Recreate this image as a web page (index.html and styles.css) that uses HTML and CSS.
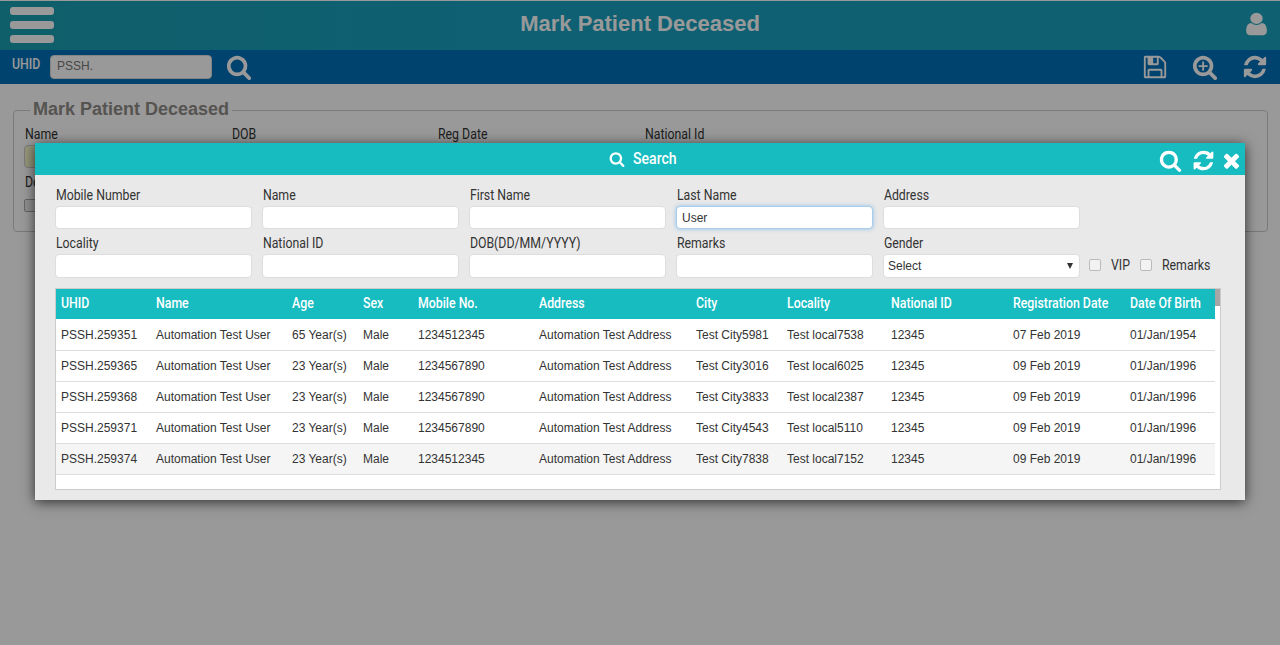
FILE: index.html
```html
<!DOCTYPE html>
<html lang="en">

<head>
    <meta charset="UTF-8">
    <meta name="viewport" content="width=device-width, initial-scale=1.0">
    <title>Mark Patient Deceased</title>
    <link rel="stylesheet" href="styles.css">
</head>

<body>
    <svg class="icon-defs" xmlns="http://www.w3.org/2000/svg">
        <symbol id="i-search" viewBox="0 0 1792 1792"><path d="M1216 832q0-185-131.5-316.5t-316.5-131.5-316.5 131.5-131.5 316.5 131.5 316.5 316.5 131.5 316.5-131.5 131.5-316.5zm512 832q0 52-38 90t-90 38q-54 0-90-38l-343-342q-179 124-399 124-143 0-273.5-55.5t-225-150-150-225-55.5-273.5 55.5-273.5 150-225 225-150 273.5-55.5 273.5 55.5 225 150 150 225 55.5 273.5q0 220-124 399l343 343q37 37 37 90z"/></symbol>
        <symbol id="i-refresh" viewBox="0 0 1792 1792"><path d="M1639 1056q0 5-1 7-64 268-268 434.5t-478 166.5q-146 0-282.5-55t-243.5-157l-129 129q-19 19-45 19t-45-19-19-45v-448q0-26 19-45t45-19h448q26 0 45 19t19 45-19 45l-137 137q71 66 161 102t187 36q134 0 250-65t186-179q11-17 53-117 8-23 30-23h192q13 0 22.5 9.5t9.5 22.5zm25-800v448q0 26-19 45t-45 19h-448q-26 0-45-19t-19-45 19-45l138-138q-148-137-349-137-134 0-250 65t-186 179q-11 17-53 117-8 23-30 23h-199q-13 0-22.5-9.5t-9.5-22.5v-7q65-268 270-434.5t480-166.5q146 0 284 55.5t245 156.5l130-129q19-19 45-19t45 19 19 45z"/></symbol>
        <symbol id="i-times" viewBox="0 0 1792 1792"><path d="M1490 1322q0 40-28 68l-136 136q-28 28-68 28t-68-28l-294-294-294 294q-28 28-68 28t-68-28l-136-136q-28-28-28-68t28-68l294-294-294-294q-28-28-28-68t28-68l136-136q28-28 68-28t68 28l294 294 294-294q28-28 68-28t68 28l136 136q28 28 28 68t-28 68l-294 294 294 294q28 28 28 68z"/></symbol>
        <symbol id="i-user" viewBox="0 0 1792 1792" preserveAspectRatio="none"><path d="M1536 1399q0 109-62.5 187t-150.5 78h-854q-88 0-150.5-78t-62.5-187q0-85 8.5-160.5t31.5-152 58.5-131 94-89 134.5-34.5q131 128 313 128t313-128q76 0 134.5 34.5t94 89 58.5 131 31.5 152 8.5 160.5zm-256-887q0 159-112.5 271.5t-271.5 112.5-271.5-112.5-112.5-271.5 112.5-271.5 271.5-112.5 271.5 112.5 112.5 271.5z"/></symbol>
        <symbol id="i-save" viewBox="0 0 1792 1792"><path d="M512 1536h768v-384h-768v384zm896 0h128v-896q0-14-10-38.5t-20-34.5l-281-281q-10-10-34-20t-39-10v416q0 40-28 68t-68 28h-576q-40 0-68-28t-28-68v-416h-128v1280h128v-416q0-40 28-68t68-28h832q40 0 68 28t28 68v416zm-384-928v-320q0-13-9.5-22.5t-22.5-9.5h-192q-13 0-22.5 9.5t-9.5 22.5v320q0 13 9.5 22.5t22.5 9.5h192q13 0 22.5-9.5t9.5-22.5zm640 32v928q0 40-28 68t-68 28h-1344q-40 0-68-28t-28-68v-1344q0-40 28-68t68-28h928q40 0 88 20t76 48l280 280q28 28 48 76t20 88z"/></symbol>
        <symbol id="i-zoom" viewBox="0 0 1792 1792"><path d="M1088 800v64q0 13-9.5 22.5t-22.5 9.5h-224v224q0 13-9.5 22.5t-22.5 9.5h-64q-13 0-22.5-9.5t-9.5-22.5v-224h-224q-13 0-22.5-9.5t-9.5-22.5v-64q0-13 9.5-22.5t22.5-9.5h224v-224q0-13 9.5-22.5t22.5-9.5h64q13 0 22.5 9.5t9.5 22.5v224h224q13 0 22.5 9.5t9.5 22.5zm128 32q0-185-131.5-316.5t-316.5-131.5-316.5 131.5-131.5 316.5 131.5 316.5 316.5 131.5 316.5-131.5 131.5-316.5zm512 832q0 53-37.5 90.5t-90.5 37.5q-54 0-90-38l-343-342q-179 124-399 124-143 0-273.5-55.5t-225-150-150-225-55.5-273.5 55.5-273.5 150-225 225-150 273.5-55.5 273.5 55.5 225 150 150 225 55.5 273.5q0 220-124 399l343 343q37 37 37 90z"/></symbol>
    </svg>

    <div class="page">
        <header class="top-bar">
            <div class="menu-btn"><span></span><span></span><span></span></div>
            <h1 class="page-title">Mark Patient Deceased</h1>
            <div class="user-box"><svg class="user-icon"><use href="#i-user"/></svg></div>
        </header>

        <div class="tool-bar">
            <label class="uhid-label cond" for="uhid">UHID</label>
            <input class="uhid-input" id="uhid" type="text" value="PSSH.">
            <svg class="tool-icon search-icon"><use href="#i-search"/></svg>
            <div class="tool-right">
                <svg class="tool-icon"><use href="#i-save"/></svg>
                <svg class="tool-icon"><use href="#i-zoom"/></svg>
                <svg class="tool-icon"><use href="#i-refresh"/></svg>
            </div>
        </div>

        <fieldset class="patient-box">
            <legend>Mark Patient Deceased</legend>
            <div class="patient-row">
                <div class="patient-col"><span class="cond">Name</span><div class="patient-name"></div></div>
                <div class="patient-col"><span class="cond">DOB</span></div>
                <div class="patient-col"><span class="cond">Reg Date</span></div>
                <div class="patient-col"><span class="cond">National Id</span></div>
            </div>
            <div class="deceased-label"><span class="cond">De</span></div>
            <div class="deceased-check"></div>
        </fieldset>
    </div>

    <div class="overlay">
        <div class="modal">
            <div class="modal-head">
                <div class="modal-title">
                    <svg class="title-icon"><use href="#i-search"/></svg>
                    <span class="cond">Search</span>
                </div>
                <div class="modal-actions">
                    <svg class="action-icon"><use href="#i-search"/></svg>
                    <svg class="action-icon"><use href="#i-refresh"/></svg>
                    <svg class="action-icon close-icon"><use href="#i-times"/></svg>
                </div>
            </div>

            <div class="modal-body">
                <form class="search-form">
                    <div class="field"><label class="cond">Mobile Number</label><input type="text"></div>
                    <div class="field"><label class="cond">Name</label><input type="text"></div>
                    <div class="field"><label class="cond">First Name</label><input type="text"></div>
                    <div class="field"><label class="cond">Last Name</label><input class="focused" type="text" value="User"></div>
                    <div class="field"><label class="cond">Address</label><input type="text"></div>
                    <div></div>
                    <div class="field tall"><label class="cond">Locality</label><input type="text"></div>
                    <div class="field tall"><label class="cond">National ID</label><input type="text"></div>
                    <div class="field tall"><label class="cond">DOB(DD/MM/YYYY)</label><input type="text"></div>
                    <div class="field tall"><label class="cond">Remarks</label><input type="text"></div>
                    <div class="field tall">
                        <label class="cond">Gender</label>
                        <div class="fake-select">Select<span class="caret"></span></div>
                    </div>
                    <div class="checks">
                        <span class="check"></span><span class="check-text vip"><span class="cond">VIP</span></span>
                        <span class="check"></span><span class="check-text"><span class="cond">Remarks</span></span>
                    </div>
                </form>

                <div class="result-box">
                    <div class="scroll-thumb"></div>
                    <table class="results">
                        <colgroup>
                            <col class="c1"><col class="c2"><col class="c3"><col class="c4"><col class="c5"><col class="c6">
                            <col class="c7"><col class="c8"><col class="c9"><col class="c10"><col class="c11">
                        </colgroup>
                        <thead>
                            <tr>
                                <th><span class="cond">UHID</span></th>
                                <th><span class="cond">Name</span></th>
                                <th><span class="cond">Age</span></th>
                                <th><span class="cond">Sex</span></th>
                                <th><span class="cond">Mobile No.</span></th>
                                <th><span class="cond">Address</span></th>
                                <th><span class="cond">City</span></th>
                                <th><span class="cond">Locality</span></th>
                                <th><span class="cond">National ID</span></th>
                                <th><span class="cond">Registration Date</span></th>
                                <th><span class="cond">Date Of Birth</span></th>
                            </tr>
                        </thead>
                        <tbody>
                            <tr>
                                <td>PSSH.259351</td><td>Automation Test User</td><td>65 Year(s)</td><td>Male</td><td>1234512345</td><td>Automation Test Address</td>
                                <td>Test City5981</td><td>Test local7538</td><td>12345</td><td>07 Feb 2019</td><td>01/Jan/1954</td>
                            </tr>
                            <tr>
                                <td>PSSH.259365</td><td>Automation Test User</td><td>23 Year(s)</td><td>Male</td><td>1234567890</td><td>Automation Test Address</td>
                                <td>Test City3016</td><td>Test local6025</td><td>12345</td><td>09 Feb 2019</td><td>01/Jan/1996</td>
                            </tr>
                            <tr>
                                <td>PSSH.259368</td><td>Automation Test User</td><td>23 Year(s)</td><td>Male</td><td>1234567890</td><td>Automation Test Address</td>
                                <td>Test City3833</td><td>Test local2387</td><td>12345</td><td>09 Feb 2019</td><td>01/Jan/1996</td>
                            </tr>
                            <tr>
                                <td>PSSH.259371</td><td>Automation Test User</td><td>23 Year(s)</td><td>Male</td><td>1234567890</td><td>Automation Test Address</td>
                                <td>Test City4543</td><td>Test local5110</td><td>12345</td><td>09 Feb 2019</td><td>01/Jan/1996</td>
                            </tr>
                            <tr class="hover-row">
                                <td>PSSH.259374</td><td>Automation Test User</td><td>23 Year(s)</td><td>Male</td><td>1234512345</td><td>Automation Test Address</td>
                                <td>Test City7838</td><td>Test local7152</td><td>12345</td><td>09 Feb 2019</td><td>01/Jan/1996</td>
                            </tr>
                        </tbody>
                    </table>
                </div>
            </div>
        </div>
    </div>
</body>

</html>
```

FILE: styles.css
```css
* {
    box-sizing: border-box;
}

body {
    margin: 0;
    height: 645px;
    overflow: hidden;
    background-color: #fff;
    font-family: "Liberation Sans", Arial, sans-serif;
    font-size: 12px;
    color: #333;
}

.icon-defs {
    display: none;
}

svg {
    fill: currentColor;
}

/* no condensed family is installed, so squeeze Roboto */
.cond {
    display: inline-block;
    font-family: Roboto, sans-serif;
    font-size: 14px;
    white-space: nowrap;
    transform: scaleX(0.88);
    transform-origin: left center;
}

/* page behind the dialog */
.page {
    padding-top: 1px;
}

.top-bar {
    height: 49px;
    padding: 6px 10px 0 10px;
    display: flex;
    justify-content: space-between;
    background: linear-gradient(to right, #1a9fb2, #18a0bf 40%, #1aa0bb);
    color: #fff;
}

.menu-btn {
    width: 44px;
    display: flex;
    flex-direction: column;
    gap: 6px;
}

.menu-btn span {
    height: 8px;
    border-radius: 3px;
    background-color: #fff;
}

.page-title {
    margin: 4px 0 0;
    font-size: 22px;
    line-height: 26px;
    font-weight: bold;
}

.user-box {
    width: 44px;
    display: flex;
    justify-content: flex-end;
}

.user-icon {
    width: 29px;
    height: 26px;
    margin: 4px -1px 0 0;
}

.tool-bar {
    height: 34px;
    padding: 0 12px 0 12px;
    display: flex;
    align-items: center;
    background-color: #0070b8;
    color: #fff;
}

.uhid-label {
    width: 38px;
    margin-top: -6px;
    font-weight: 500;
}

.uhid-input {
    width: 162px;
    height: 24px;
    padding: 0 6px 2px;
    border: 1px solid #ddd;
    border-radius: 4px;
    background-color: #fff;
    font-family: "Liberation Sans", Arial, sans-serif;
    font-size: 12px;
    color: #777;
}

.tool-icon {
    width: 26px;
    height: 26px;
}

.search-icon {
    margin-left: 14px;
}

.tool-right {
    margin-left: auto;
    display: flex;
    gap: 24px;
}

.patient-box {
    margin: 15px 12px 0 13px;
    height: 133px;
    padding: 0 11px;
    border: 1px solid #ccc;
    border-radius: 4px;
}

.patient-box legend {
    padding: 0 3px 2px;
    margin-left: 5px;
    font-size: 18px;
    font-weight: bold;
    color: #908c88;
}

.patient-row {
    display: flex;
    padding-top: 4px;
}

.patient-col {
    width: 206.7px;
}

.patient-name {
    height: 23px;
    width: 197px;
    margin: 3px 0 0 -1px;
    border: 1px solid #ccc;
    border-radius: 4px;
    background-color: #f8fbcc;
}

.deceased-label {
    margin-top: 6px;
}

.deceased-check {
    width: 13px;
    height: 13px;
    margin: 9px 0 0 -1px;
    border: 1px solid #aaa;
    border-radius: 2px;
    background-color: #eee;
}

/* dimmed layer and dialog */
.overlay {
    position: absolute;
    top: 0;
    left: 0;
    width: 100%;
    height: 100%;
    background-color: rgba(0, 0, 0, 0.4);
}

.modal {
    position: absolute;
    top: 143px;
    left: 35px;
    width: 1210px;
    height: 357px;
    background-color: #e9e9e9;
    box-shadow: 0 2px 12px rgba(0, 0, 0, 0.7);
}

.modal-head {
    height: 32px;
    padding: 3px 2px 0 0;
    position: relative;
    display: flex;
    justify-content: flex-end;
    align-items: center;
    background-color: #17bcc1;
    color: #fff;
}

.modal-title {
    position: absolute;
    left: 574px;
    top: 6px;
    display: flex;
    align-items: center;
    gap: 8px;
}

.modal-title .cond {
    font-size: 16px;
    font-weight: 500;
}

.title-icon {
    width: 16px;
    height: 16px;
}

.modal-actions {
    display: flex;
    align-items: center;
    gap: 10px;
}

.action-icon {
    width: 23px;
    height: 23px;
}

.close-icon {
    margin-left: -5px;
}

.modal-body {
    padding: 11px 24px 0 20px;
}

.search-form {
    display: grid;
    grid-template-columns: repeat(5, 197px) 1fr;
    column-gap: 10px;
    row-gap: 5px;
}

.field label {
    display: block;
    height: 20px;
    padding-left: 1px;
    line-height: 18px;
    color: #333;
}

.field input,
.fake-select {
    display: block;
    width: 100%;
    height: 23px;
    padding: 0 5px;
    border: 1px solid #ddd;
    border-radius: 4px;
    background-color: #fff;
    font-family: "Liberation Sans", Arial, sans-serif;
    font-size: 12px;
    color: #333;
}

.field.tall input,
.fake-select {
    height: 24px;
}

.field input.focused {
    border-color: #a9cdea;
    box-shadow: 0 0 4px rgba(102, 175, 233, 0.7);
}

.fake-select {
    display: flex;
    align-items: center;
    justify-content: space-between;
    padding: 0 6px 1px 4px;
}

.caret {
    width: 0;
    height: 0;
    border-left: 3px solid transparent;
    border-right: 3px solid transparent;
    border-top: 6px solid #333;
}

.checks {
    margin-left: -1px;
    display: flex;
    align-items: center;
    align-self: end;
    height: 26px;
}

.check {
    width: 12px;
    height: 12px;
    flex: none;
    border: 1px solid #bbb;
    border-radius: 2px;
    background-color: #f2f2f2;
}

.check-text {
    width: 60px;
    margin-left: 10px;
}

.check-text.vip {
    width: 19px;
    margin-left: 10px;
    margin-right: 10px;
}

.result-box {
    position: relative;
    height: 202px;
    margin-top: 10px;
    padding-right: 5px;
    border: 1px solid #ccc;
    background-color: #fff;
}

.scroll-thumb {
    position: absolute;
    top: 0;
    right: 0;
    width: 5px;
    height: 17px;
    background-color: #a6a6a6;
}

.results {
    width: 100%;
    table-layout: fixed;
    border-collapse: collapse;
}

.c1 { width: 95px; }
.c2 { width: 136px; }
.c3 { width: 71px; }
.c4 { width: 55px; }
.c5 { width: 121px; }
.c6 { width: 157px; }
.c7 { width: 91px; }
.c8 { width: 104px; }
.c9 { width: 122px; }
.c10 { width: 117px; }

.results th {
    height: 30px;
    padding: 0 0 2px 5px;
    text-align: left;
    background-color: #17bcc1;
    color: #fff;
    white-space: nowrap;
}

.results th .cond {
    font-weight: 500;
}

.results td {
    height: 31px;
    padding: 0 0 0 5px;
    border-bottom: 1px solid #ddd;
    white-space: nowrap;
    color: #333;
}

.results tbody tr:first-child td {
    padding-top: 2px;
}

.hover-row td {
    background-color: #f5f5f5;
}
```
